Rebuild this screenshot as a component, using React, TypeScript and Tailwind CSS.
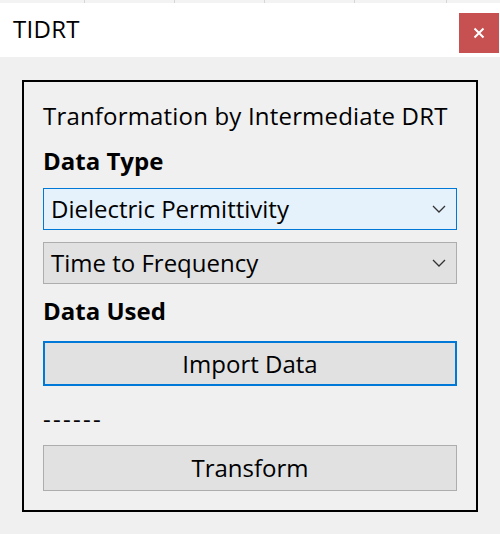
import React from "react";

function Chevron() {
  return (
    <svg width="14" height="8" viewBox="0 0 14 8" className="shrink-0">
      <path d="M1 1 L7 7 L13 1" fill="none" stroke="#333" strokeWidth="1.3" />
    </svg>
  );
}

export default function App() {
  const font = { fontFamily: '"Open Sans", "Noto Sans", sans-serif' };
  return (
    <div className="w-[500px] h-[534px] flex flex-col bg-[#f0f0f0] text-black" style={font}>
      <div className="h-[3px] bg-[#f3f3f3] flex">
        <div className="w-[85px] border-r border-[#d6d6d6]" />
        <div className="w-[90px] border-r border-[#d6d6d6]" />
        <div className="w-[90px] border-r border-[#d6d6d6]" />
        <div className="w-[90px] border-r border-[#d6d6d6]" />
        <div className="w-[92px] border-r border-[#d6d6d6]" />
      </div>
      <div className="h-[54px] bg-white flex items-start">
        <div className="flex-1 h-[52px] flex items-center pl-[13px] text-[24px] leading-none tracking-[0.3px]">TIDRT</div>
        <div className="mt-[10px] mr-[1px] w-[40px] h-[40px] bg-[#c75050] flex items-center justify-center">
          <svg width="12" height="12" viewBox="0 0 12 12">
            <path d="M1.5 1.5 L10.5 10.5 M10.5 1.5 L1.5 10.5" stroke="white" strokeWidth="2" />
          </svg>
        </div>
      </div>
      <div className="flex-1 pt-[23px] px-[22px] pb-[22px]">
        <div className="h-[432px] border-2 border-black px-[19px] pt-[18px] flex flex-col">
          <div className="h-[31px] flex items-center text-[24px] leading-none tracking-[0.18px]">Tranformation by Intermediate DRT</div>
          <div className="h-[30px] mt-[15px] flex items-center text-[24px] leading-none font-bold">Data Type</div>
          <div className="h-[42px] mt-[12px] border border-[#0078d7] bg-[#e5f1fb] flex items-center pl-[7px] pr-[10px] text-[24px] leading-none">
            <span className="flex-1">Dielectric Permittivity</span>
            <Chevron />
          </div>
          <div className="h-[42px] mt-[12px] border border-[#adadad] bg-[#e1e1e1] flex items-center pl-[7px] pr-[10px] text-[24px] leading-none">
            <span className="flex-1">Time to Frequency</span>
            <Chevron />
          </div>
          <div className="h-[30px] mt-[12px] flex items-center text-[24px] leading-none font-bold">Data Used</div>
          <div className="h-[45px] mt-[15px] border-2 border-[#0078d7] bg-[#e1e1e1] flex items-center justify-center text-[24px] leading-none">Import Data</div>
          <div className="h-[30px] mt-[18px] flex items-center text-[24px] leading-none tracking-[2.3px]">------</div>
          <div className="h-[46px] mt-[11px] border border-[#adadad] bg-[#e1e1e1] flex items-center justify-center text-[24px] leading-none">Transform</div>
        </div>
      </div>
    </div>
  );
}
